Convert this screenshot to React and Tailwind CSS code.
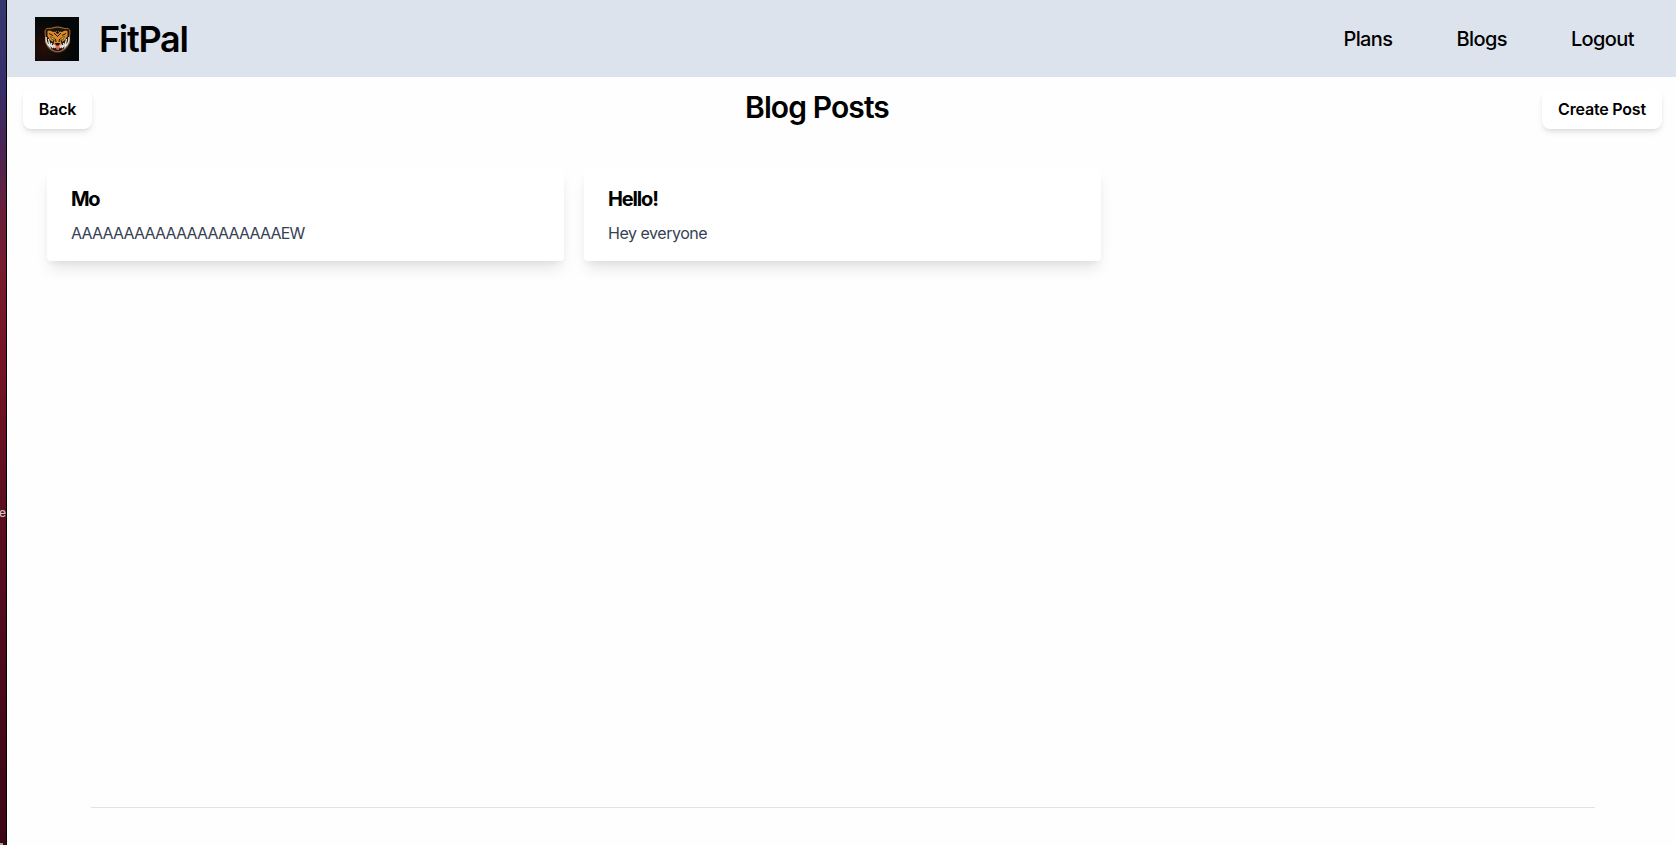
const posts = [
  { title: "Mo", body: "AAAAAAAAAAAAAAAAAAAAEW", titleClass: "tracking-[-1.5px]", bodyClass: "tracking-[-0.78px]" },
  { title: "Hello!", body: "Hey everyone", titleClass: "tracking-[-1.15px]", bodyClass: "tracking-[-0.46px]" },
];

function TigerLogo() {
  return (
    <svg viewBox="0 0 44 44" className="h-11 w-11 shrink-0">
      <defs>
        <radialGradient id="glow" cx="0.2" cy="0.7" r="0.7">
          <stop offset="0" stopColor="#260e08" />
          <stop offset="0.6" stopColor="#0f0a08" />
          <stop offset="1" stopColor="#030707" />
        </radialGradient>
        <radialGradient id="halo">
          <stop offset="0.85" stopColor="#77716a" />
          <stop offset="1" stopColor="#1b1714" stopOpacity="0" />
        </radialGradient>
      </defs>
      <rect width="44" height="44" fill="url(#glow)" />
      <ellipse cx="22.500" cy="22.500" rx="13.500" ry="14" fill="url(#halo)" />
      <path d="M10 14 Q11 10.500 15 11.500 Q22.500 8.500 30 11.500 Q34 10.500 35 14 L34.500 20 Q36 26 31.500 30 L26 34 Q22.500 35.500 19 34 L13.500 30 Q9 26 10.500 20Z" fill="#1d1713" stroke="#b06b25" strokeWidth="1" />
      <path d="M12.500 14 Q15 12.500 18 15 L22.500 14 L27 15 Q30 12.500 32.500 14 L32.500 19 L30 23 L27 25 L25.500 31 L19.500 31 L18 25 L15 23 L12.500 19Z" fill="#dc892c" />
      <path d="M11.200 20 Q10.500 26 15 30 L14 25M13.500 22 Q14 27 18 31 L16.500 26M33.800 20 Q34.500 26 30 30 L31 25M31.500 22 Q31 27 27 31 L28.500 26" fill="none" stroke="#e5e5e8" strokeWidth="1.300" />
      <path d="M20 13.500 L22.500 17 L25 13.500M19 16 L22.500 19.500 L26 16M14 16.500 L18 18.500M31 16.500 L27 18.500M19 23 L17.500 28M26 23 L27.500 28M22.500 11 V17M20.500 22 L21 25M24.500 22 L24 25" fill="none" stroke="#1b120b" strokeWidth="1" />
      <path d="M15.500 19.500 L20 21.500 L17 22.800ZM29.500 19.500 L25 21.500 L28 22.800Z" fill="#d0c93e" stroke="#241608" strokeWidth="0.500" />
      <path d="M20 26 H25 L24 28.500 H21Z" fill="#151112" />
      <path d="M18 27 L21 29 L20 31.500 L18 30ZM27 27 L24 29 L25 31.500 L27 30Z" fill="#ddd4cd" />
      <path d="M20.500 29.500 H25 L23.800 32.500 Q22.700 33.500 21.600 32.500Z" fill="#ec5a70" />
    </svg>
  );
}

function DesktopEdge() {
  return (
    <div className="flex w-[7px] shrink-0 flex-col overflow-hidden border-r border-black bg-[linear-gradient(to_bottom,#34386f_0%,#372f69_10%,#4b2452_18%,#66203d_24%,#781b2e_32%,#751427_42%,#5e0f20_58%,#4f0b1d_75%,#420918_90%,#3b0812_100%)]">
      <span className="mt-[505px] -ml-px text-[12px] leading-[16px] font-medium text-[#c9c5c6]">e</span>
      <span className="mt-auto h-[2px] w-[3px] bg-[#a5a09f]" />
    </div>
  );
}

export default function App() {
  return (
    <div className="flex h-[845px] w-[1676px] overflow-hidden bg-[#fefefe] font-['Inter','Liberation_Sans',sans-serif] text-black">
      <DesktopEdge />
      <div className="flex min-w-0 flex-1 flex-col">
        <header className="flex h-[77px] shrink-0 items-center bg-[#dde3ed] pt-px pr-[42px] pl-7">
          <TigerLogo />
          <span className="ml-5 text-4xl font-semibold tracking-[-1.3px]">FitPal</span>
          <nav className="ml-auto flex gap-16 text-xl font-medium tracking-[-0.6px]">
            <a>Plans</a>
            <a>Blogs</a>
            <a>Logout</a>
          </nav>
        </header>
        <div className="flex shrink-0 items-start justify-between pt-3 pr-[14px] pl-4">
          <button className="h-10 w-[69px] rounded-lg bg-white text-base font-semibold tracking-[-0.2px] shadow-md">Back</button>
          <h1 className="text-3xl font-semibold tracking-[-0.9px]">Blog Posts</h1>
          <button className="h-10 w-[120px] rounded-lg bg-white text-base font-semibold tracking-[-0.2px] shadow-md">Create Post</button>
        </div>
        <main className="grid grid-cols-[517px_517px] gap-5 pt-10 pl-10">
          {posts.map((post) => (
            <article key={post.title} className="h-[92px] rounded bg-white px-6 py-4 shadow-[0_10px_15px_-3px_rgba(0,0,0,0.1),0_4px_6px_-2px_rgba(0,0,0,0.05)]">
              <h2 className={`mb-2 text-xl font-bold ${post.titleClass}`}>{post.title}</h2>
              <p className={`text-base text-gray-700 ${post.bodyClass}`}>{post.body}</p>
            </article>
          ))}
        </main>
        <hr className="mt-auto mr-[81px] mb-[37px] ml-[84px] border-[#e1e2e3]" />
      </div>
    </div>
  );
}
